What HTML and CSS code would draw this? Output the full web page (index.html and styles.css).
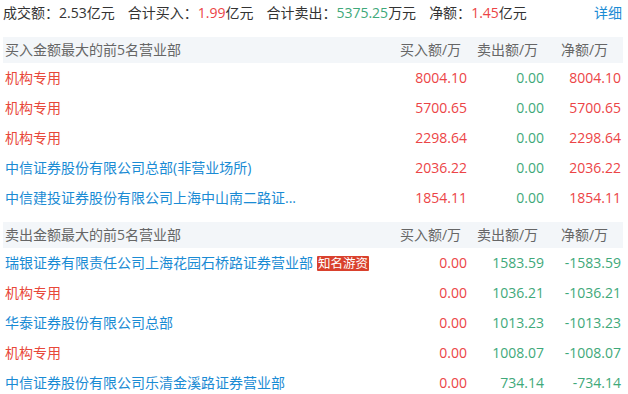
FILE: index.html
```html
<!DOCTYPE html>
<html lang="zh">
<head>
<meta charset="utf-8">
<link rel="stylesheet" href="styles.css">
</head>
<body>
<div class="wrap">
  <div class="summary">
    <span class="item">成交额：<span class="dark">2.53</span>亿元</span>
    <span class="item">合计买入：<span class="up">1.99</span>亿元</span>
    <span class="item">合计卖出：<span class="down">5375.25</span>万元</span>
    <span class="item">净额：<span class="up">1.45</span>亿元</span>
    <a class="detail">详细</a>
  </div>

  <div class="section">
    <div class="row head">
      <div class="name">买入金额最大的前5名营业部</div>
      <div class="col">买入额/万</div>
      <div class="col">卖出额/万</div>
      <div class="col">净额/万</div>
    </div>
    <div class="row">
      <div class="name inst">机构专用</div>
      <div class="num up">8004.10</div>
      <div class="num down">0.00</div>
      <div class="num up">8004.10</div>
    </div>
    <div class="row">
      <div class="name inst">机构专用</div>
      <div class="num up">5700.65</div>
      <div class="num down">0.00</div>
      <div class="num up">5700.65</div>
    </div>
    <div class="row">
      <div class="name inst">机构专用</div>
      <div class="num up">2298.64</div>
      <div class="num down">0.00</div>
      <div class="num up">2298.64</div>
    </div>
    <div class="row">
      <div class="name link">中信证券股份有限公司总部(非营业场所)</div>
      <div class="num up">2036.22</div>
      <div class="num down">0.00</div>
      <div class="num up">2036.22</div>
    </div>
    <div class="row">
      <div class="name link">中信建投证券股份有限公司上海中山南二路证...</div>
      <div class="num up">1854.11</div>
      <div class="num down">0.00</div>
      <div class="num up">1854.11</div>
    </div>
  </div>

  <div class="section">
    <div class="row head">
      <div class="name">卖出金额最大的前5名营业部</div>
      <div class="col">买入额/万</div>
      <div class="col">卖出额/万</div>
      <div class="col">净额/万</div>
    </div>
    <div class="row">
      <div class="name link">瑞银证券有限责任公司上海花园石桥路证券营业部<span class="badge">知名游资</span></div>
      <div class="num up">0.00</div>
      <div class="num down">1583.59</div>
      <div class="num down">-1583.59</div>
    </div>
    <div class="row">
      <div class="name inst">机构专用</div>
      <div class="num up">0.00</div>
      <div class="num down">1036.21</div>
      <div class="num down">-1036.21</div>
    </div>
    <div class="row">
      <div class="name link">华泰证券股份有限公司总部</div>
      <div class="num up">0.00</div>
      <div class="num down">1013.23</div>
      <div class="num down">-1013.23</div>
    </div>
    <div class="row">
      <div class="name inst">机构专用</div>
      <div class="num up">0.00</div>
      <div class="num down">1008.07</div>
      <div class="num down">-1008.07</div>
    </div>
    <div class="row">
      <div class="name link">中信证券股份有限公司乐清金溪路证券营业部</div>
      <div class="num up">0.00</div>
      <div class="num down">734.14</div>
      <div class="num down">-734.14</div>
    </div>
  </div>
</div>
</body>
</html>
```

FILE: styles.css
```css
html, body {
  margin: 0;
  padding: 0;
  background: #fff;
}
body {
  font-family: "Open Sans", "Noto Sans CJK SC", sans-serif;
  font-size: 14px;
  color: #333;
  overflow: hidden;
}
.wrap {
  width: 620px;
  margin-left: 3px;
}
.summary {
  display: flex;
  align-items: center;
  height: 26px;
  line-height: 26px;
  margin-bottom: 11px;
  white-space: nowrap;
}
.summary .item {
  margin-right: 13px;
}
.summary .detail {
  margin-left: auto;
  margin-right: 1px;
  color: #1a8bd4;
  cursor: pointer;
}
.dark { color: #333; }
.up { color: #ec4446; }
.down { color: #3fa97a; }
.section {
  margin-bottom: 9px;
}
.row {
  display: grid;
  grid-template-columns: 1fr 77px 77px 77px;
  height: 30px;
  align-items: center;
  line-height: 20px;
  white-space: nowrap;
}
.row.head {
  height: 26px;
  background: #f3f6f9;
  color: #666;
}
.name {
  padding-left: 2px;
  display: flex;
  align-items: center;
}
.inst { color: #e8483a; }
.link { color: #1a8bd4; }
.col {
  text-align: center;
}
.num {
  text-align: right;
  padding-right: 2px;
}
.badge {
  margin-left: 4px;
  background: #d9412d;
  color: #fff;
  font-size: 12.5px;
  line-height: 15px;
  padding: 0 1px;
  border-radius: 1px;
}
```
